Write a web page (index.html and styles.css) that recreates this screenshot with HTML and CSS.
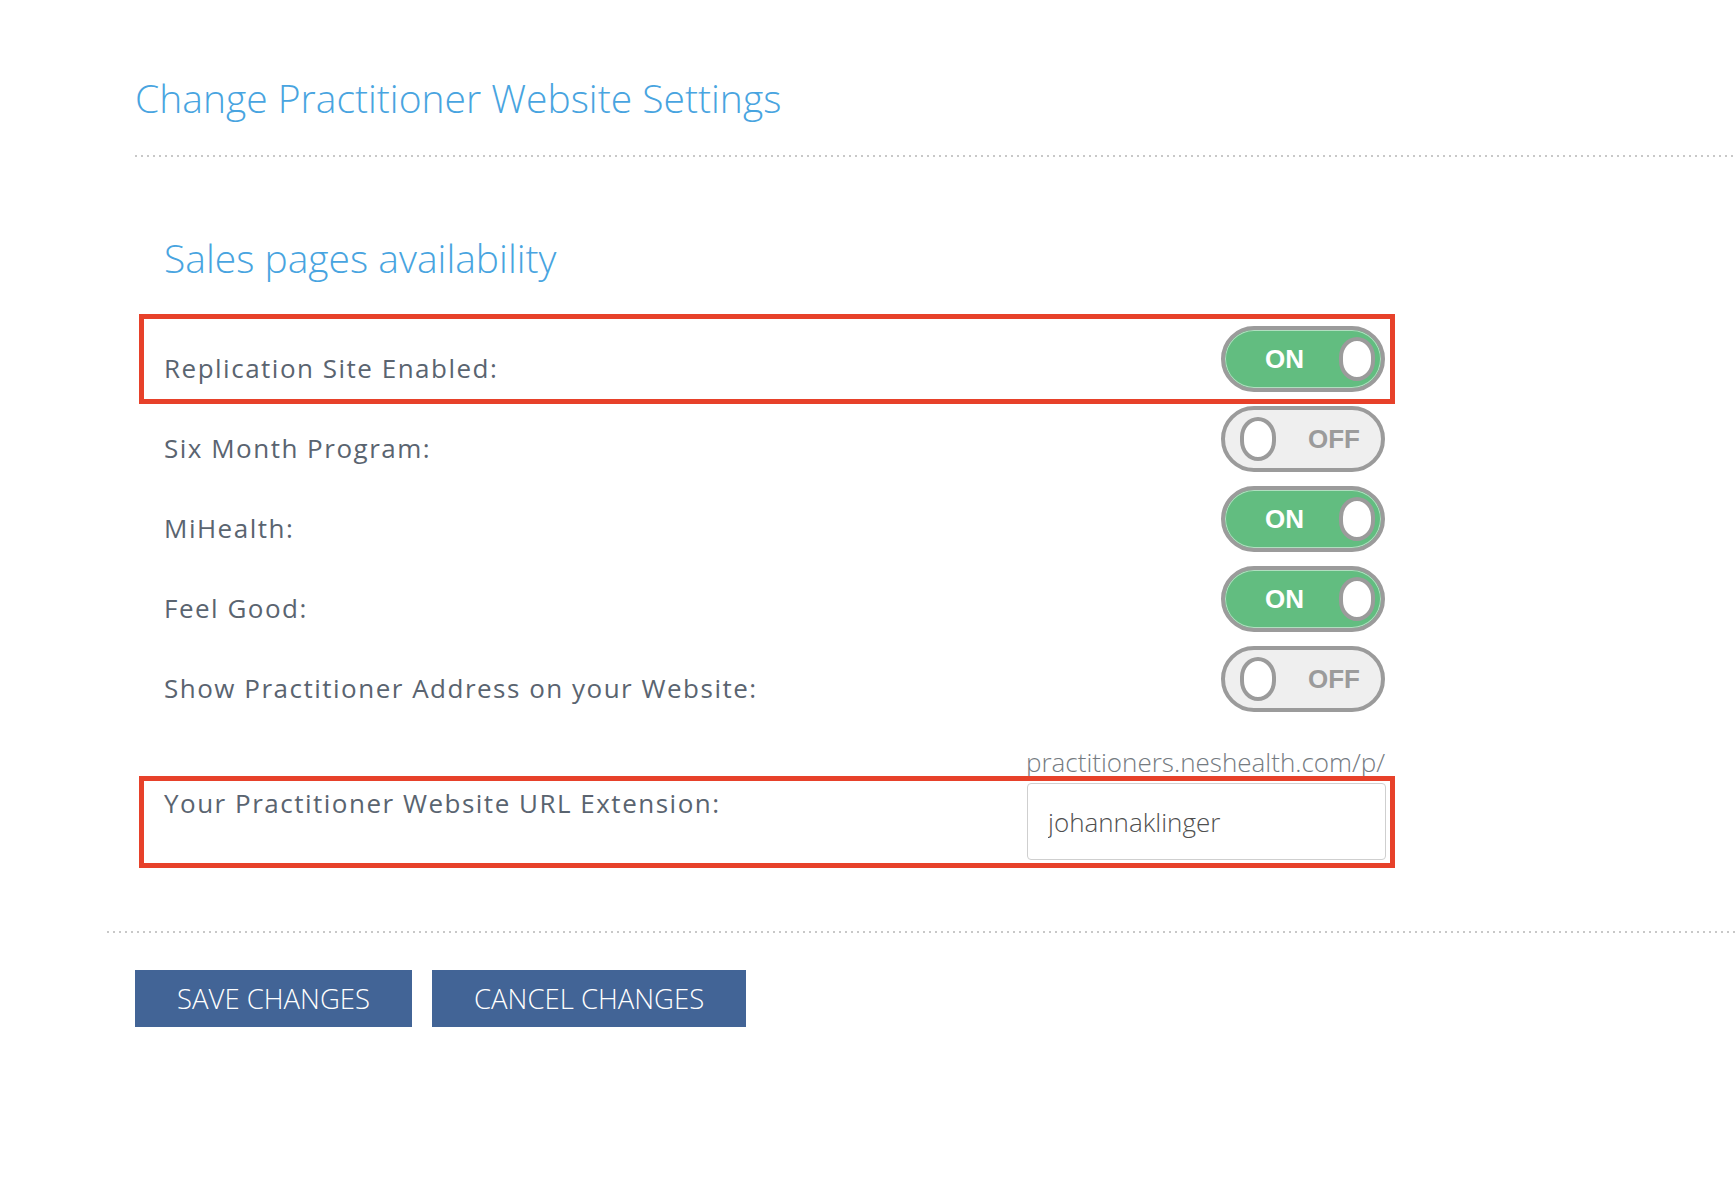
FILE: index.html
```html
<!doctype html>
<html lang="en">

<head>
    <title>Change Practitioner Website Settings</title>
    <meta charset="utf-8">
    <link rel="stylesheet" href="styles.css">
</head>

<body>
    <div class="page">
        <div class="header">
            <h1 class="title">Change Practitioner Website Settings</h1>
        </div>

        <div class="settings">
            <h2 class="subtitle">Sales pages availability</h2>

            <div class="row marked">
                <span class="label">Replication Site Enabled:</span>
                <div class="toggle on"><span class="toggle-text">ON</span><span class="knob"></span></div>
            </div>
            <div class="row">
                <span class="label">Six Month Program:</span>
                <div class="toggle off"><span class="knob"></span><span class="toggle-text">OFF</span></div>
            </div>
            <div class="row">
                <span class="label">MiHealth:</span>
                <div class="toggle on"><span class="toggle-text">ON</span><span class="knob"></span></div>
            </div>
            <div class="row">
                <span class="label">Feel Good:</span>
                <div class="toggle on"><span class="toggle-text">ON</span><span class="knob"></span></div>
            </div>
            <div class="row">
                <span class="label">Show Practitioner Address on your Website:</span>
                <div class="toggle off"><span class="knob"></span><span class="toggle-text">OFF</span></div>
            </div>

            <div class="url-caption">practitioners.neshealth.com/p/</div>
            <div class="url-row marked">
                <span class="label url-label">Your Practitioner Website URL Extension:</span>
                <input type="text" class="url-input" value="johannaklinger">
            </div>
        </div>

        <div class="divider"></div>

        <div class="actions">
            <button class="btn">Save changes</button>
            <button class="btn">Cancel changes</button>
        </div>
    </div>
</body>

</html>
```

FILE: styles.css
```css
body {
    margin: 0;
    background: white;
    font-family: "Open Sans", "Liberation Sans", Arial, sans-serif;
}

.page {
    padding-left: 107px;
}

.header {
    margin-left: 28px;
    padding-top: 74px;
    padding-bottom: 33px;
    background-image: linear-gradient(to right, #c8c8c8 2px, transparent 2px);
    background-size: 6px 2px;
    background-repeat: repeat-x;
    background-position: left bottom;
}

.title {
    margin: 0;
    margin-bottom: 2px;
    font-size: 39px;
    line-height: 48px;
    font-weight: 300;
    color: #48a4e0;
}

.settings {
    margin-left: 37px;
    width: 1246px;
}

.subtitle {
    margin: 77px 0 37px 20px;
    font-size: 39px;
    line-height: 48px;
    font-weight: 300;
    color: #48a4e0;
}

.row {
    display: flex;
    align-items: center;
    justify-content: space-between;
    height: 80px;
    padding: 0 5px 0 20px;
}

.marked {
    outline: 5px solid #e7412a;
}

.label {
    padding-top: 18px;
    font-size: 26px;
    line-height: 30px;
    letter-spacing: 1.5px;
    color: #5a6470;
}

.toggle {
    display: flex;
    align-items: center;
    justify-content: space-between;
    box-sizing: border-box;
    width: 164px;
    height: 66px;
    border: 4px solid #9b9b9b;
    border-radius: 33px;
    font-family: "Liberation Sans", Arial, sans-serif;
    font-weight: bold;
    font-size: 26px;
}

.toggle.on {
    background-color: #62bd80;
    color: white;
    padding: 0 6px 0 40px;
    box-shadow: inset 0 0 0 1px rgba(255, 255, 255, 0.5);
}

.toggle.off {
    background-color: #efefef;
    color: #9b9b9b;
    padding: 0 21px 0 15px;
}

.knob {
    box-sizing: border-box;
    width: 36px;
    height: 44px;
    border: 4px solid #9b9b9b;
    border-radius: 18px / 20px;
    background-color: white;
}

.url-caption {
    margin: 28px 0 4px 0;
    padding-left: 882px;
    font-size: 26px;
    line-height: 30px;
    font-weight: 300;
    color: #757b82;
}

.url-row {
    display: flex;
    align-items: flex-start;
    justify-content: space-between;
    padding: 2px 4px 3px 20px;
}

.url-label {
    padding-top: 5px;
}

.url-input {
    box-sizing: border-box;
    width: 359px;
    height: 77px;
    margin: 0;
    padding: 0 20px;
    border: 1px solid #cfcfcf;
    border-radius: 4px;
    font-family: "Open Sans", "Liberation Sans", Arial, sans-serif;
    font-size: 26px;
    font-weight: 300;
    color: #4f4f4f;
    outline: none;
}

.divider {
    height: 2px;
    margin-top: 68px;
    background-image: linear-gradient(to right, #c8c8c8 2px, transparent 2px);
    background-size: 6px 2px;
}

.actions {
    display: flex;
    gap: 20px;
    margin: 37px 0 0 28px;
}

.btn {
    height: 57px;
    padding: 0 42px;
    border: none;
    background-color: #426496;
    color: white;
    font-family: "Open Sans", "Liberation Sans", Arial, sans-serif;
    font-size: 27.5px;
    font-weight: 300;
    text-transform: uppercase;
    cursor: pointer;
}
```
